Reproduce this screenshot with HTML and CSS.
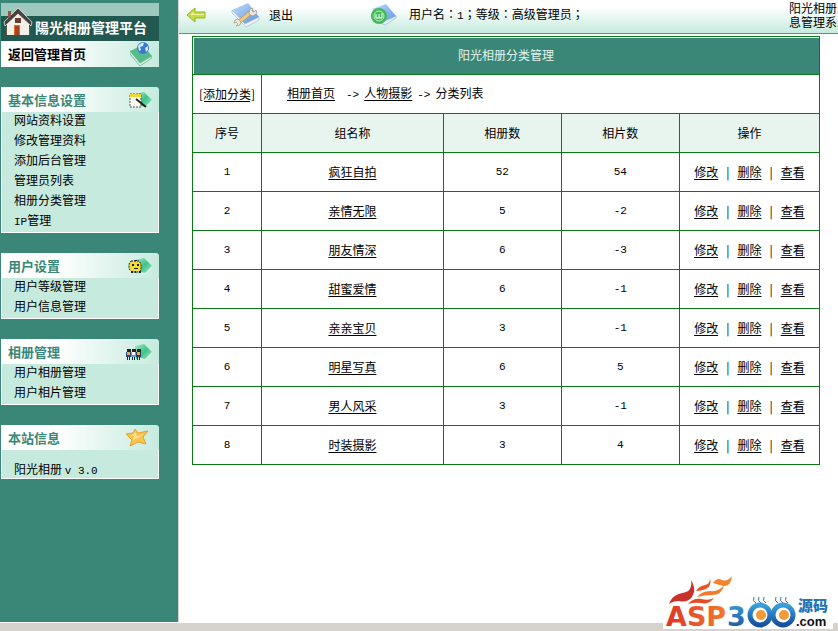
FILE: index.html
```html
<!DOCTYPE html>
<html lang="zh-CN">
  <head>
    <title>阳光相册分类管理</title>
    <meta charset="utf-8" />
    <meta name="viewport" content="width=device-width, initial-scale=1" />
    <link rel="stylesheet" href="styles.css">
  </head>
  <body>
    <svg width="0" height="0" class="defs" aria-hidden="true">
      <defs>
        <linearGradient id="gem" x1="0" y1="0" x2="1" y2="1">
          <stop offset="0" stop-color="#a6ecc6"/><stop offset=".5" stop-color="#3fc488"/><stop offset="1" stop-color="#a9e8c8"/>
        </linearGradient>
        <linearGradient id="book" x1="0" y1="0" x2="1" y2="1">
          <stop offset="0" stop-color="#c3dcfa"/><stop offset="1" stop-color="#5b93e2"/>
        </linearGradient>
        <linearGradient id="fire" x1="0" y1="0" x2="1" y2="0">
          <stop offset="0" stop-color="#dc3527"/><stop offset="1" stop-color="#f47a2b"/>
        </linearGradient>
        <linearGradient id="sea" x1="0" y1="0" x2="0" y2="1">
          <stop offset="0" stop-color="#3aa0dc"/><stop offset="1" stop-color="#174f9c"/>
        </linearGradient>
        <symbol id="gem-shape" viewBox="0 0 18 18">
          <path d="M1 3l9-2 8 8-7 8-9-1z" fill="url(#gem)"/>
          <path d="M11 16l7-7v2l-7 7-8-2v-2z" fill="#d9f3e5"/>
        </symbol>
      </defs>
    </svg>

    <div class="frames">
      <div class="sidebar">
        <div class="brand">
          <svg class="house" width="30" height="30" viewBox="0 0 30 30">
            <path d="M4 14L15 4l11 10v14H4z" fill="#f3f0e8"/>
            <path d="M15 1L1 15l1 4L15 7l13 12 1-4z" fill="#4a4340" stroke="#f5f5f5" stroke-width=".7"/>
            <path d="M5 4h3v5l-3 3z" fill="#8b5a48"/>
            <path d="M12 11h6v5h-6z" fill="#6d3f31"/>
            <path d="M11 18h6v10h-6z" fill="#d96e2a"/>
            <path d="M12 19h4v9h-4z" fill="#a8431d"/>
            <path d="M3 20h1v8H3zM26 20h1v8h-1z" fill="#76563f"/>
          </svg>
          <span>陽光相册管理平台</span>
        </div>
        <div class="home">
          <a href="#">返回管理首页</a>
          <svg width="22" height="24" viewBox="0 0 22 24">
            <path d="M0 9l13-6 9 11-12 7z" fill="#55bd88"/>
            <path d="M0 9l10 12 12-7v2l-12 8L0 12z" fill="#d9efe4" stroke="#4aa47b" stroke-width=".6"/>
            <circle cx="13" cy="6" r="6" fill="#3c79cf"/>
            <path d="M8 4q3-4 6-3l-1 3-3 1 1 3-2 1zM15 6l3-2v4l-2 2z" fill="#d9ebff"/>
          </svg>
        </div>

        <div class="menu">
          <h2>基本信息设置
            <svg width="24" height="18" viewBox="0 0 24 18">
              <use href="#gem-shape" x="6" width="18" height="18"/>
              <path d="M2 3h11v13H2z" fill="#fdfdf4" stroke="#555" stroke-width="1" stroke-dasharray="2 1"/>
              <path d="M2 3h11v3H2z" fill="#edd83c"/>
              <path d="M8 8l10 8" stroke="#222" stroke-width="2"/>
            </svg>
          </h2>
          <ul>
            <li><a href="#">网站资料设置</a></li>
            <li><a href="#">修改管理资料</a></li>
            <li><a href="#">添加后台管理</a></li>
            <li><a href="#">管理员列表</a></li>
            <li><a href="#">相册分类管理</a></li>
            <li><a href="#"><span class="half">IP</span>管理</a></li>
          </ul>
        </div>

        <div class="menu">
          <h2>用户设置
            <svg width="24" height="18" viewBox="0 0 24 18">
              <use href="#gem-shape" x="6" width="18" height="18"/>
              <path d="M3 4h8l2 3v6l-2 2H4l-3-3V7z" fill="#f1dc36" stroke="#222" stroke-dasharray="2 1"/>
              <path d="M4 7h2v2H4zM9 7h2v2H9zM6 11h4v1H6zM3 14h2v2H3zM7 14h1v2H7zM11 14h2v2h-2zM6 3h3v1H6z" fill="#222"/>
            </svg>
          </h2>
          <ul>
            <li><a href="#">用户等级管理</a></li>
            <li><a href="#">用户信息管理</a></li>
          </ul>
        </div>

        <div class="menu">
          <h2>相册管理
            <svg width="26" height="18" viewBox="0 0 26 18">
              <use href="#gem-shape" x="8" width="18" height="18"/>
              <path d="M1 6h4v3H1zM6 6h4v3H6zM11 6h4v3h-4z" fill="#222"/>
              <path d="M0 9h5v5H0z" fill="#284b85"/><path d="M5 9h5v5H5z" fill="#46a9db"/><path d="M10 9h5v5h-5z" fill="#263a5e"/>
              <path d="M1 9h3v3H1zM11 9h3v3h-3z" fill="#f2aa42"/><path d="M6 9h3v3H6z" fill="#fff"/>
              <path d="M1 14h1v3H1zM3 14h1v3H3zM6 14h1v3H6zM8 14h1v3H8zM11 14h1v3h-1zM13 14h1v3h-1z" fill="#222"/>
            </svg>
          </h2>
          <ul>
            <li><a href="#">用户相册管理</a></li>
            <li><a href="#">用户相片管理</a></li>
          </ul>
        </div>

        <div class="menu version">
          <h2>本站信息
            <svg width="24" height="19" viewBox="0 0 24 19">
              <path d="M10 1l3 4 10-2-5 6 3 7-8-2-8 4 2-6-6-6 7-1z" fill="#f8c44c" stroke="#e6a02d"/>
              <path d="M10 4l2 4 7-2-6 4-5 2 1-4-4-1 4-1z" fill="#fde08a"/>
            </svg>
          </h2>
          <p>阳光相册 <span class="half">v 3.0</span></p>
        </div>
      </div>

      <div class="main">
        <div class="topbar">
          <a href="#" class="back" aria-label="后退">
            <svg width="20" height="16" viewBox="0 0 20 16">
              <path d="M1 8l8-7v4h10v6H9v4z" fill="#c6dc3f" stroke="#8fb52c"/>
              <path d="M4 8l4-3v2h10v1z" fill="#edf59a"/>
            </svg>
          </a>
          <a href="#" class="logout">
            <svg width="30" height="26" viewBox="0 0 30 26">
              <path d="M1 8l16-7 11 14-14 7z" fill="url(#book)"/>
              <path d="M1 8l13 14 14-7v3l-13 7L1 11z" fill="#eef4fc" stroke="#9ab4d6" stroke-width=".6"/>
              <path d="M8 20l11-9" stroke="#bd8c38" stroke-width="4"/>
              <path d="M8 20l11-9" stroke="#f5c978" stroke-width="3"/>
              <path d="M18 11l1-4 3-1-1 3 2 1 2-2 1 3-4 3-3-1zM4 18l3-1 3 3-1 3-4 1 2-2-2-2-2 1z" fill="#eee9e0" stroke="#a5927a" stroke-width=".7"/>
            </svg>
            退出
          </a>
          <div class="user">
            <svg width="27" height="23" viewBox="0 0 27 23">
              <path d="M2 6l14-5 10 12-11 8z" fill="url(#book)"/>
              <path d="M26 13v2l-11 7-5-2z" fill="#e3eefb" stroke="#8eaad0" stroke-width=".6"/>
              <circle cx="9" cy="13" r="8" fill="#42b95a"/>
              <circle cx="9" cy="13" r="5" fill="none" stroke="#b9f0bd" stroke-width="1"/>
              <path d="M6 11v4h3v-4M9 15h3v-5" fill="none" stroke="#fff"/>
            </svg>
            <span>用户名<span class="punct" lang="zh-TW">：</span><span class="half">1</span><span class="punct" lang="zh-TW">；</span>等级<span class="punct" lang="zh-TW">：</span>高级管理员<span class="punct" lang="zh-TW">；</span></span>
          </div>
          <div class="product">阳光相册<br>息管理系</div>
        </div>

        <table class="list">
          <colgroup>
            <col class="c-no"><col class="c-name"><col class="c-num"><col class="c-num"><col>
          </colgroup>
          <thead>
            <tr><th colspan="5" class="title">阳光相册分类管理</th></tr>
            <tr>
              <td><a href="#">[添加分类]</a></td>
              <td colspan="4"><div class="path"><a href="#" class="first">相册首页</a><span class="half">-&gt;</span><a href="#">人物摄影</a><span class="half">-&gt;</span>分类列表</div></td>
            </tr>
            <tr class="cols"><th>序号</th><th>组名称</th><th>相册数</th><th>相片数</th><th>操作</th></tr>
          </thead>
          <tbody>
            <tr><td>1</td><td class="name"><a href="#">疯狂自拍</a></td><td>52</td><td>54</td><td><div class="ops"><a href="#">修改</a>|<a href="#">删除</a>|<a href="#">查看</a></div></td></tr>
            <tr><td>2</td><td class="name"><a href="#">亲情无限</a></td><td>5</td><td>-2</td><td><div class="ops"><a href="#">修改</a>|<a href="#">删除</a>|<a href="#">查看</a></div></td></tr>
            <tr><td>3</td><td class="name"><a href="#">朋友情深</a></td><td>6</td><td>-3</td><td><div class="ops"><a href="#">修改</a>|<a href="#">删除</a>|<a href="#">查看</a></div></td></tr>
            <tr><td>4</td><td class="name"><a href="#">甜蜜爱情</a></td><td>6</td><td>-1</td><td><div class="ops"><a href="#">修改</a>|<a href="#">删除</a>|<a href="#">查看</a></div></td></tr>
            <tr><td>5</td><td class="name"><a href="#">亲亲宝贝</a></td><td>3</td><td>-1</td><td><div class="ops"><a href="#">修改</a>|<a href="#">删除</a>|<a href="#">查看</a></div></td></tr>
            <tr><td>6</td><td class="name"><a href="#">明星写真</a></td><td>6</td><td>5</td><td><div class="ops"><a href="#">修改</a>|<a href="#">删除</a>|<a href="#">查看</a></div></td></tr>
            <tr><td>7</td><td class="name"><a href="#">男人风采</a></td><td>3</td><td>-1</td><td><div class="ops"><a href="#">修改</a>|<a href="#">删除</a>|<a href="#">查看</a></div></td></tr>
            <tr><td>8</td><td class="name"><a href="#">时装摄影</a></td><td>3</td><td>4</td><td><div class="ops"><a href="#">修改</a>|<a href="#">删除</a>|<a href="#">查看</a></div></td></tr>
          </tbody>
        </table>
      </div>
    </div>
    <div class="statusbar"></div>

    <svg class="watermark" width="170" height="54" viewBox="0 0 170 54">
      <path d="M0 14h170v38H0z" fill="#fff"/>
      <path d="M6 27q3-9 13-11 11-1 9-13 6 9 1 17-5 6-13 4-6 0-10 3z" fill="#c8322a"/>
      <path d="M33 14q3-5 9-6 5-1 5-7 2 8-4 11-5 2-10 2z" fill="#ea5528"/>
      <path d="M50 6q4-6 9-3 5 2 10-4-1 10-8 10-5-1-11-3z" fill="#f5832b"/>
      <path d="M34 20q5-6 13-6 9 1 14-6-2 10-12 10-8 0-15 2z" fill="#f47a2b"/>
      <path d="M25 27q5-6 13-5 8 2 13-1-5 7-13 5-7-1-13 1z" fill="#e64b25"/>
      <text x="3" y="49" class="asp">ASP</text>
      <text x="64" y="49" class="num">3</text>
      <ellipse cx="97" cy="38" rx="10" ry="10" fill="#fff" stroke="url(#sea)" stroke-width="5"/>
      <ellipse cx="120" cy="38" rx="10" ry="10" fill="#fff" stroke="url(#sea)" stroke-width="5"/>
      <circle cx="98" cy="38" r="5" fill="#f39a38"/><circle cx="121" cy="38" r="5" fill="#f39a38"/>
      <path d="M93 26q-4-2-2-6M98 26q-4-2-2-6M103 26q-4-2-2-6M115 26q-4-2-2-6M120 26q-4-2-2-6M125 26q-4-2-2-6" fill="none" stroke="#2a75b8" stroke-width="1"/>
      <text x="135" y="34" class="src">源码</text>
      <text x="133" y="49" class="com">.com</text>
    </svg>
  </body>
</html>
```

FILE: styles.css
```css
* {
  box-sizing: border-box;
}

body {
  margin: 0;
  min-height: 100vh;
  display: flex;
  flex-direction: column;
  position: relative;
  overflow-x: hidden;
  font-family: "Noto Sans CJK SC", sans-serif;
  font-size: 12px;
  line-height: 20px;
  color: #000;
  background: #fff;
}

a {
  color: #000;
  text-decoration: none;
}

svg {
  display: block;
  flex: none;
}

.defs {
  position: absolute;
}

/* latin text at half the width of a chinese character */
.half {
  font-family: "Liberation Mono", monospace;
  font-size: 11px;
}

/* centred full-width punctuation */
.punct {
  font-family: "Noto Sans CJK TC", sans-serif;
}

.frames {
  flex: 1;
  display: flex;
}

.sidebar {
  flex: none;
  width: 179px;
  padding: 3px 19px 20px 1px;
  background: #3a8778;
  border-right: 1px solid #d6d3ce;
}

.brand {
  height: 38px;
  display: flex;
  align-items: flex-end;
  padding: 0 0 4px 2px;
  gap: 2px;
  color: #fff;
  font-family: "Noto Sans CJK TC", sans-serif;
  font-size: 14px;
  font-weight: bold;
  white-space: nowrap;
  background: linear-gradient(#9dc8bd 13px, #21584f 13px);
}

.home {
  height: 26px;
  display: flex;
  align-items: center;
  justify-content: space-between;
  padding: 0 7px;
  font-size: 13px;
  line-height: 18px;
  font-weight: bold;
  background: linear-gradient(to right, #fff 35%, #c6ebdf);
}

.menu {
  margin-top: 20px;
  background: #c6eadd;
  border: 1px solid #fff;
  border-top: none;
  border-radius: 0 4px 0 0;
}

.menu h2 {
  margin: 0 -1px;
  height: 25px;
  display: flex;
  align-items: center;
  justify-content: space-between;
  padding: 0 7px;
  font-size: 13px;
  color: #3a8778;
  background: linear-gradient(to right, #fff 35%, #c6ebdf);
  border-radius: 0 4px 0 0;
}

.menu ul {
  margin: 0;
  padding: 0 0 0 12px;
  list-style: none;
}

.menu li {
  height: 20px;
  line-height: 16px;
}

.version h2 {
  padding-right: 10px;
}

.version p {
  margin: 0;
  padding: 10px 0 0 12px;
  line-height: 18px;
  height: 28px;
}

.main {
  flex: 1;
  min-width: 0;
}

.topbar {
  height: 34px;
  display: flex;
  align-items: center;
  padding: 0 0 4px 7px;
  white-space: nowrap;
  overflow: hidden;
  background: linear-gradient(#fff 20%, #c6ebdf);
  border-bottom: 1px solid #5e8f9c;
}

.logout {
  display: flex;
  align-items: center;
  gap: 8px;
  margin-left: 25px;
}

.user {
  display: flex;
  align-items: center;
  gap: 12px;
  margin-left: 77px;
}

.product {
  margin-left: auto;
  padding-right: 1px;
  line-height: 14px;
}

.list {
  width: calc(100% - 31px);
  margin: 2px 18px 0 13px;
  table-layout: fixed;
  border-collapse: collapse;
}

.c-no { width: 69px; }
.c-name { width: 29%; }
.c-num { width: 118px; }

.list th,
.list td {
  height: 39px;
  padding: 0 0 1px;
  text-align: center;
  font-weight: normal;
  border: 1px solid #0a7a14;
}

.list .title {
  height: 38px;
  color: #e6f4ee;
  background: #3a8778;
  box-shadow: inset 1px 1px #fff;
}

.cols th {
  background: #e8f5ee;
}

.list a {
  text-decoration: underline;
  text-underline-offset: 2px;
}

.list tbody td {
  font-family: "Liberation Mono", monospace;
  font-size: 11px;
}

.list tbody .name,
.list tbody .ops {
  font-family: "Noto Sans CJK SC", sans-serif;
  font-size: 12px;
}

.path {
  display: flex;
  align-items: baseline;
  gap: 5px;
  padding-left: 25px;
}

.path .first {
  margin-right: 6px;
}

.ops {
  display: flex;
  justify-content: center;
  gap: 8px;
}

.statusbar {
  height: 9px;
  background: #d6d3ce;
  border-top: 1px solid #fff;
}

.watermark {
  position: absolute;
  right: 5px;
  bottom: 0;
  overflow: visible;
}

.asp,
.num {
  font: bold 27px "DejaVu Sans", sans-serif;
  fill: url(#fire);
}

.num {
  fill: url(#sea);
}

.src {
  font: 900 15px "Noto Sans CJK SC", sans-serif;
  fill: #2474b7;
}

.com {
  font: bold 13px "Liberation Sans", sans-serif;
  fill: #111;
}
```
